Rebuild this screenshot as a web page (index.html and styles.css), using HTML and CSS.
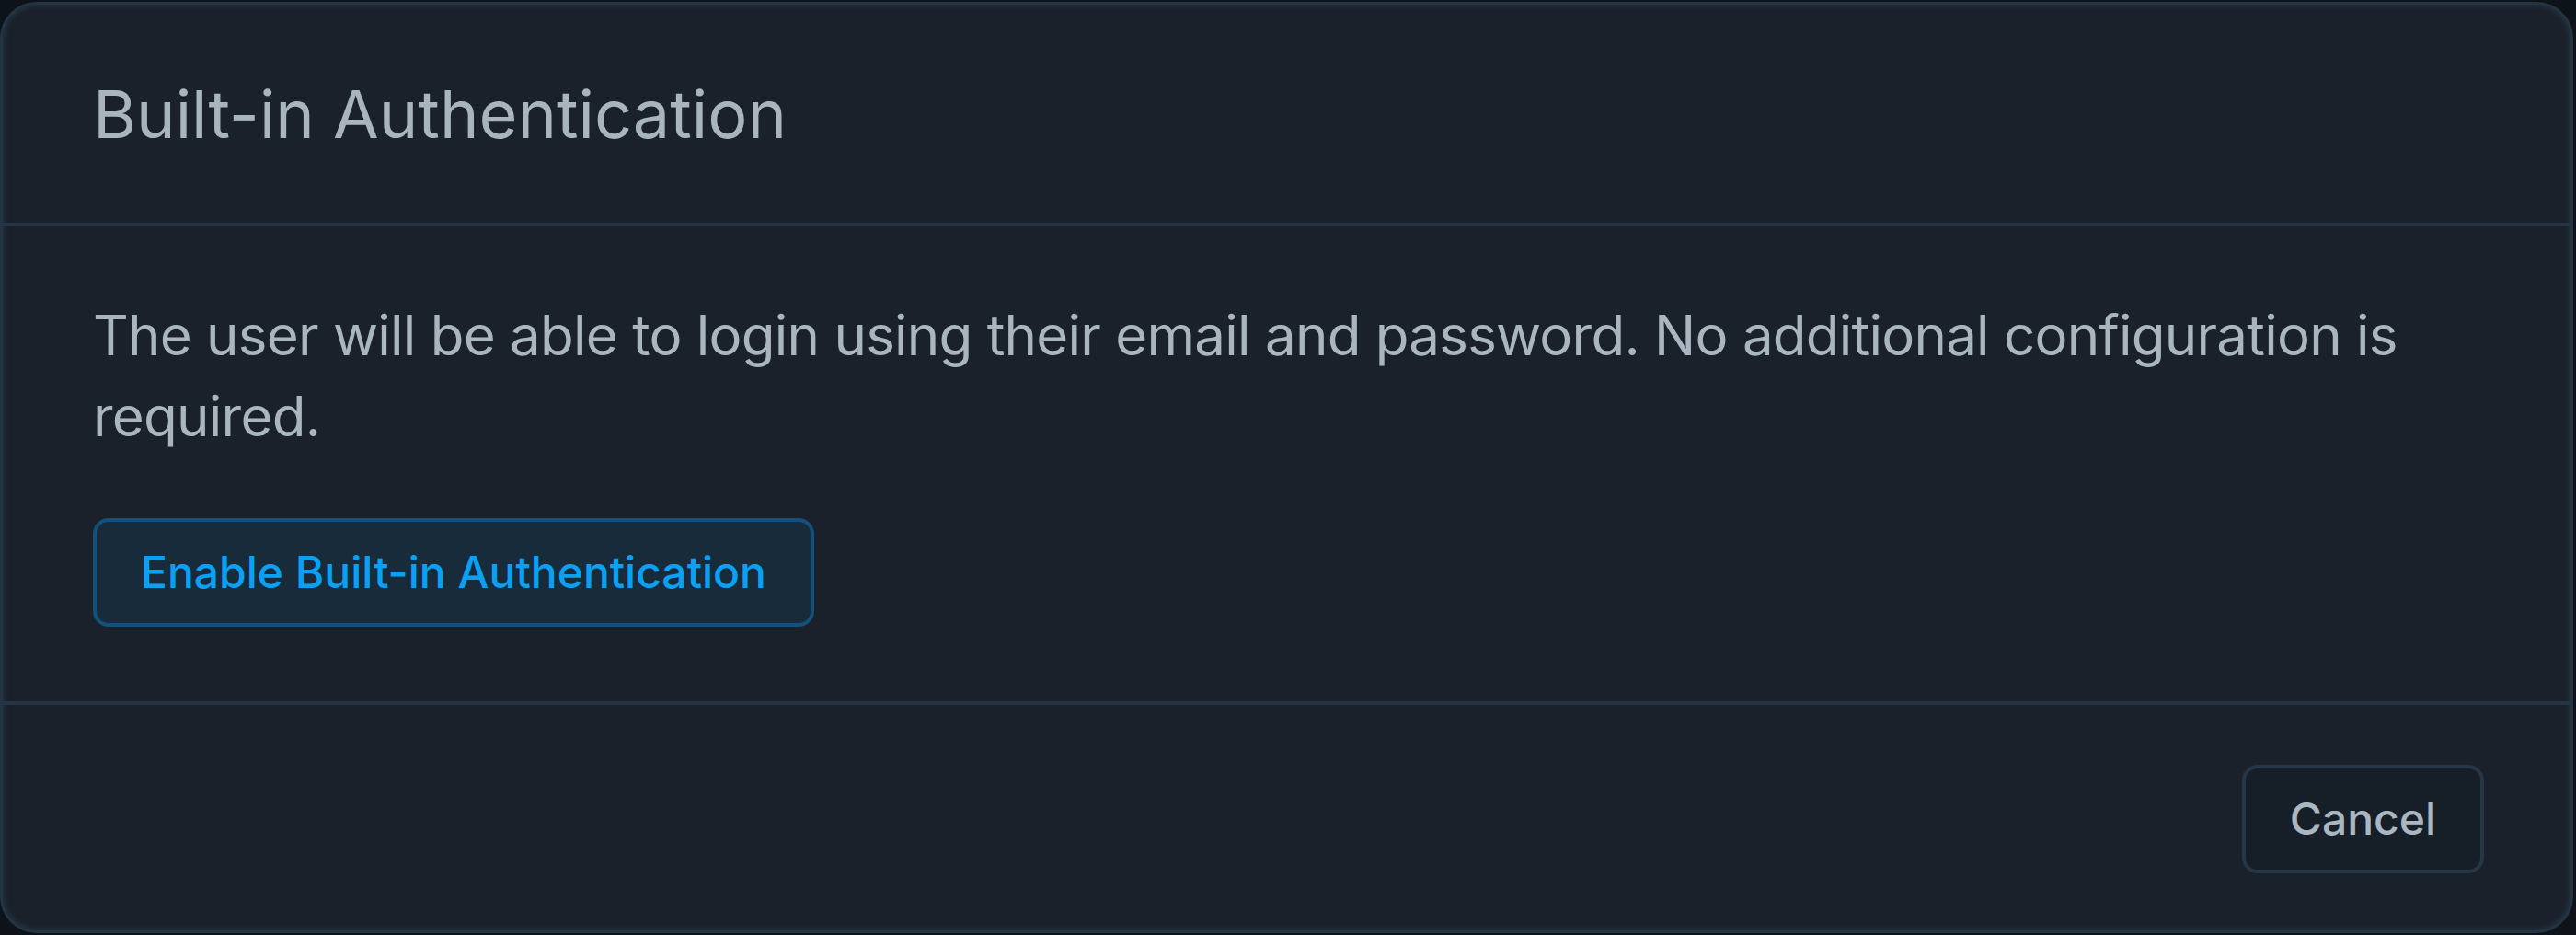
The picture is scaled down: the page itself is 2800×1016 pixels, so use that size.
FILE: index.html
```html
<!DOCTYPE html>
<html lang="en">
<head>
<meta charset="utf-8">
<title>Built-in Authentication</title>
<link rel="stylesheet" href="styles.css">
</head>
<body>
<div class="backdrop">
  <div class="modal">
    <div class="modal-header">
      <h2 class="modal-title">Built-in Authentication</h2>
    </div>
    <div class="modal-body">
      <p class="modal-text">The user will be able to login using their email and password. No additional configuration is required.</p>
      <button class="btn btn-primary" type="button">Enable Built-in Authentication</button>
    </div>
    <div class="modal-footer">
      <button class="btn btn-secondary" type="button">Cancel</button>
    </div>
  </div>
</div>
</body>
</html>
```

FILE: styles.css
```css
* {
  box-sizing: border-box;
}

html, body {
  margin: 0;
  padding: 0;
}

body {
  background: #0e131a;
  font-family: Inter, "Noto Sans", "Liberation Sans", sans-serif;
  width: 2800px;
  height: 1016px;
  overflow: hidden;
}

.backdrop {
  padding: 2px 3px 2px 0;
  height: 1016px;
}

.modal {
  height: 1012px;
  background: #1a212a;
  border: 3px solid #253443;
  border-radius: 40px;
  box-shadow: inset 0 0 6px 1px rgba(40, 56, 73, 0.9);
  display: flex;
  flex-direction: column;
  overflow: hidden;
}

.modal-header {
  height: 241px;
  flex: none;
  display: flex;
  align-items: center;
  padding: 0 94px 0 98px;
  border-bottom: 4px solid #253443;
}

.modal-title {
  margin: 0;
  font-size: 72px;
  font-weight: 400;
  color: #a8b5bf;
  line-height: 1;
}

.modal-body {
  flex: none;
  padding: 74px 94px 81px 98px;
  border-bottom: 4px solid #253443;
}

.modal-text {
  margin: 0 0 67px 0;
  font-size: 60px;
  line-height: 88px;
  color: #a9b6c0;
  font-weight: 400;
  letter-spacing: -0.75px;
}

.modal-footer {
  flex: 1;
  display: flex;
  justify-content: flex-end;
  align-items: flex-start;
  padding: 65px 94px 0 98px;
}

.btn {
  height: 118px;
  padding: 0 48px;
  border-radius: 17px;
  border: 4px solid;
  font-family: Inter, "Noto Sans", "Liberation Sans", sans-serif;
  font-size: 48px;
  font-weight: 500;
  line-height: 1;
  display: inline-flex;
  align-items: center;
  justify-content: center;
  cursor: pointer;
}

.btn-primary {
  background: #172b3b;
  border-color: #13507c;
  color: #0aa1f4;
}

.btn-secondary {
  background: #161e27;
  border-color: #263646;
  color: #aab6c0;
}
```
